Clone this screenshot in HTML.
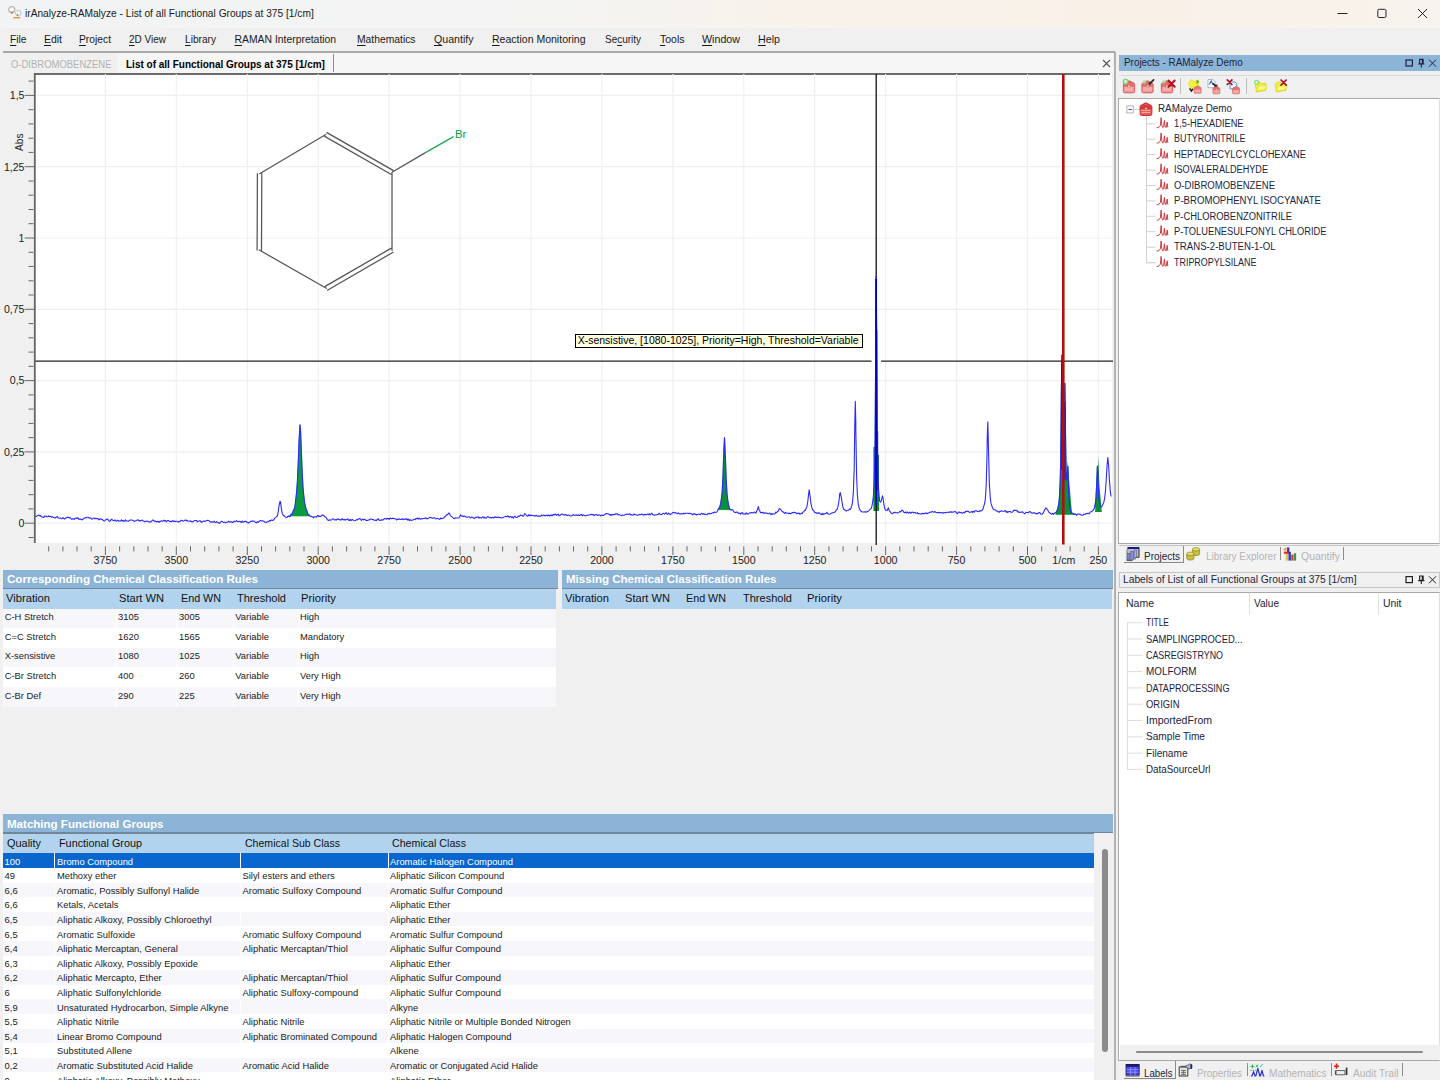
<!DOCTYPE html>
<html><head><meta charset="utf-8"><title>irAnalyze-RAMalyze</title>
<style>
html,body{margin:0;padding:0;}
body{width:1440px;height:1080px;overflow:hidden;position:relative;background:#f0f0f0;font-family:"Liberation Sans", sans-serif;}
.t{position:absolute;white-space:pre;transform-origin:0 50%;}
u{text-decoration:underline;text-underline-offset:1.5px;text-decoration-thickness:1px}
svg{position:absolute;left:0;top:0;overflow:visible}
</style></head><body>
<div style="position:absolute;left:0px;top:0px;width:1440px;height:28px;background:linear-gradient(90deg,#f1f3f4 0%,#f4f4f3 38%,#f8f2ea 56%,#f9f1e8 80%,#f8f3ed 100%);"></div>
<svg width="1440" height="28"><g stroke="#222" stroke-width="1" fill="none">
<path d="M1337.5 13.5h10"/><rect x="1377.8" y="9.3" width="8.2" height="8.2" rx="1.4"/><path d="M1418 9l9 9M1427 9l-9 9"/></g></svg>
<svg width="30" height="28"><circle cx="18.3" cy="13" r="2.8" fill="#fafafa" stroke="#c4c4c4" stroke-width="1"/>
<circle cx="11.7" cy="9.6" r="3" fill="#fff" stroke="#b2b2b2" stroke-width="1.2"/><circle cx="11.9" cy="12.7" r="1.1" fill="#f25a5a"/>
<path d="M16.4 15.6l1.2-1.8 1 1.8z" fill="#777"/><path d="M13.3 17.7h7.1" stroke="#f08838" stroke-width="1.3"/></svg>
<div style="position:absolute;left:0px;top:28px;width:1440px;height:24px;background:#f0f0f0;"></div>
<div style="position:absolute;left:3px;top:51px;width:1112px;height:2px;background:#a9a9a9;"></div>
<div style="position:absolute;left:4px;top:53px;width:1109px;height:20px;background:#f6f6f6;"></div>
<div style="position:absolute;left:4px;top:53px;width:113px;height:20px;background:#f0f0f0;"></div>
<div style="position:absolute;left:333px;top:54px;width:1px;height:18px;background:#8a8a8a;"></div>
<svg width="1440" height="80"><path d="M1103 60l7 7M1110 60l-7 7" stroke="#555" stroke-width="1.1" fill="none"/></svg>
<div style="position:absolute;left:1114px;top:52px;width:1.8px;height:1028px;background:#b2b2b2;"></div>
<div style="position:absolute;left:35px;top:74px;width:1076.5px;height:469px;background:#ffffff;"></div>
<div style="position:absolute;left:35px;top:73px;width:1074.5px;height:2px;background:#6c6c6c;"></div>
<svg width="1440" height="600" shape-rendering="auto"><path d="M1098.4 74V543 M1027.5 74V543 M956.6 74V543 M885.6 74V543 M814.7 74V543 M743.8 74V543 M672.9 74V543 M601.9 74V543 M531.0 74V543 M460.1 74V543 M389.1 74V543 M318.2 74V543 M247.3 74V543 M176.3 74V543 M105.4 74V543 M35 523.2H1111.5 M35 451.9H1111.5 M35 380.6H1111.5 M35 309.3H1111.5 M35 238.0H1111.5 M35 166.7H1111.5 M35 95.4H1111.5" stroke="#f0f0f0" stroke-width="1.2" fill="none"/><path d="M288.6 516.0L289.4 516.8L290.2 516.2L291.0 514.2L291.8 514.3L292.6 512.5L293.4 510.6L294.2 509.0L295.0 505.9L295.8 499.3L296.6 492.0L297.4 481.3L298.2 463.8L299.0 441.4L300.0 424.8L300.6 431.2L301.4 452.7L302.2 472.2L303.0 487.3L303.8 495.8L304.6 502.5L305.4 506.5L306.2 509.4L307.0 511.1L307.8 513.8L308.6 515.2L309.4 514.9L309.4 516.0L288.6 516.0Z" fill="#0c9a40" stroke="#0c9a40" stroke-width="0.6"/><path d="M718.2 509.4L719.0 508.1L719.8 506.5L720.6 503.9L721.4 498.5L722.2 491.5L723.0 475.1L723.8 451.2L724.5 437.5L725.4 457.2L726.2 479.4L727.0 493.7L727.8 500.6L728.6 504.9L729.4 508.0L730.2 509.8L731.0 509.6L731.8 509.7L732.6 509.7L732.6 509.7L718.2 509.7Z" fill="#0b8f37" stroke="#0b8f37" stroke-width="0.6"/><path d="M873.4 496.4L874.2 483.4L875.0 446.7L875.8 339.5L875.8 329.4L876.2 276.1L876.6 327.4L876.7 338.2L877.4 446.6L878.2 483.5L879.0 496.1L879.8 501.3L879.8 501.3L873.4 501.3Z" fill="#0b8f37" stroke="#0b8f37" stroke-width="0.6"/><path d="M1055.8 512.4L1056.6 511.5L1057.4 509.6L1058.2 506.6L1059.0 502.3L1059.8 491.7L1060.6 464.7L1061.3 393.6L1061.4 387.4L1061.8 355.1L1062.2 383.9L1062.2 389.7L1063.0 453.8L1063.8 459.1L1064.5 416.0L1064.9 383.2L1065.4 418.2L1065.4 423.7L1066.2 475.6L1067.0 480.6L1067.3 473.7L1067.8 466.4L1068.2 477.9L1068.6 489.6L1069.4 504.1L1070.2 508.3L1071.0 511.7L1071.8 512.9L1072.6 513.3L1073.4 513.9L1074.2 513.8L1075.0 514.5L1075.0 514.5L1055.8 514.5Z" fill="#0b8f37" stroke="#0b8f37" stroke-width="0.6"/><path d="M1095.0 505.5L1095.8 500.0L1096.6 485.9L1097.0 474.1L1097.4 466.1L1097.9 474.1L1098.2 484.8L1099.0 499.5L1099.8 504.8L1100.6 506.1L1101.4 506.9L1101.4 506.9L1095.0 506.9Z" fill="#0b8f37" stroke="#0b8f37" stroke-width="0.6"/><path d="M873.4 511V447h1.6V330h2.4V455h1.6v56z" fill="#0b8f37"/><path d="M1095 512l2.6-30 .8-26.4 1 30 2.4 26.4z" fill="#0b8f37"/><path d="M1058 514l2.5-38h6.3l1-15.3 1.2 18 3 35.3z" fill="#0b8f37"/><path d="M35 361.1H871.5M881 361.1H1113" stroke="#222" stroke-width="1.3" fill="none"/><path d="M876.2 74V545" stroke="#111" stroke-width="1.3" fill="none"/><path d="M35.0 516.2L35.8 516.4L36.6 516.4L37.4 515.6L38.2 515.3L39.0 515.1L39.8 516.0L40.6 515.6L41.4 516.7L42.2 516.9L43.0 517.4L43.8 517.4L44.6 516.1L45.4 516.2L46.2 516.1L47.0 516.8L47.8 516.7L48.6 515.8L49.4 516.6L50.2 516.4L51.0 516.5L51.8 517.4L52.6 516.8L53.4 517.3L54.2 517.7L55.0 518.1L55.8 517.5L56.6 516.9L57.4 516.6L58.2 517.8L59.0 518.3L59.8 518.3L60.6 518.1L61.4 518.7L62.2 518.4L63.0 517.6L63.8 518.6L64.6 519.0L65.4 518.5L66.2 517.7L67.0 517.4L67.8 517.4L68.6 517.3L69.4 518.0L70.2 517.6L71.0 518.5L71.8 519.5L72.6 518.7L73.4 518.8L74.2 519.5L75.0 518.4L75.8 518.1L76.6 518.5L77.4 517.7L78.2 518.1L79.0 519.4L79.8 519.1L80.6 519.0L81.4 519.6L82.2 520.0L83.0 519.1L83.8 518.5L84.6 517.9L85.4 517.8L86.2 517.9L87.0 517.2L87.8 517.3L88.6 517.5L89.4 518.3L90.2 518.0L91.0 518.0L91.8 519.2L92.6 519.0L93.4 518.0L94.2 518.1L95.0 518.9L95.8 518.2L96.6 518.6L97.4 518.6L98.2 519.0L99.0 519.8L99.8 519.0L100.6 518.8L101.4 519.5L102.2 519.2L103.0 520.3L103.8 520.8L104.6 521.0L105.4 520.0L106.2 519.6L107.0 518.9L107.8 519.2L108.6 520.4L109.4 521.1L110.2 521.2L111.0 519.8L111.8 519.2L112.6 520.1L113.4 520.6L114.2 520.7L115.0 519.8L115.8 521.0L116.6 521.1L117.4 520.3L118.2 520.4L119.0 521.3L119.8 521.0L120.6 521.0L121.4 519.9L122.2 521.1L123.0 520.3L123.8 521.5L124.6 520.8L125.4 519.8L126.2 521.1L127.0 521.0L127.8 521.0L128.6 521.3L129.4 520.4L130.2 520.1L131.0 520.0L131.8 520.0L132.6 520.2L133.4 521.0L134.2 521.1L135.0 521.1L135.8 520.8L136.6 520.5L137.4 519.9L138.2 519.9L139.0 520.9L139.8 520.5L140.6 521.0L141.4 520.3L142.2 520.1L143.0 521.0L143.8 521.1L144.6 521.7L145.4 521.4L146.2 521.2L147.0 521.0L147.8 521.2L148.6 521.8L149.4 522.1L150.2 521.9L151.0 521.9L151.8 520.8L152.6 520.1L153.4 520.0L154.2 521.4L155.0 520.9L155.8 521.2L156.6 522.1L157.4 521.5L158.2 521.4L159.0 522.5L159.8 521.4L160.6 521.4L161.4 520.8L162.2 521.2L163.0 521.2L163.8 520.1L164.6 520.9L165.4 520.5L166.2 521.8L167.0 520.8L167.8 520.6L168.6 520.6L169.4 521.2L170.2 521.8L171.0 521.2L171.8 521.7L172.6 520.7L173.4 521.4L174.2 521.0L175.0 521.8L175.8 521.3L176.6 521.2L177.4 521.6L178.2 522.1L179.0 521.5L179.8 521.6L180.6 520.7L181.4 520.2L182.2 520.5L183.0 521.2L183.8 520.9L184.6 520.4L185.4 519.9L186.2 520.8L187.0 520.2L187.8 521.0L188.6 521.3L189.4 521.1L190.2 520.8L191.0 521.6L191.8 521.4L192.6 521.9L193.4 521.5L194.2 520.5L195.0 520.5L195.8 520.5L196.6 520.6L197.4 521.9L198.2 521.2L199.0 521.0L199.8 520.7L200.6 521.1L201.4 522.4L202.2 521.8L203.0 521.5L203.8 520.9L204.6 521.4L205.4 521.2L206.2 520.6L207.0 520.5L207.8 520.2L208.6 520.5L209.4 521.2L210.2 521.8L211.0 522.2L211.8 521.6L212.6 522.2L213.4 522.2L214.2 521.2L215.0 522.3L215.8 522.6L216.6 521.6L217.4 522.1L218.2 522.9L219.0 522.9L219.8 523.1L220.6 522.0L221.4 521.4L222.2 521.4L223.0 522.2L223.8 522.6L224.6 522.1L225.4 522.8L226.2 522.4L227.0 522.3L227.8 522.3L228.6 521.1L229.4 521.7L230.2 522.3L231.0 521.9L231.8 521.9L232.6 522.5L233.4 522.1L234.2 521.1L235.0 521.8L235.8 521.5L236.6 520.5L237.4 521.5L238.2 521.6L239.0 521.5L239.8 521.2L240.6 521.8L241.4 522.5L242.2 521.0L243.0 522.2L243.8 521.8L244.6 521.6L245.4 521.4L246.2 521.3L247.0 522.4L247.8 522.6L248.6 523.0L249.4 522.2L250.2 521.9L251.0 521.1L251.8 521.4L252.6 520.9L253.4 521.3L254.2 521.0L255.0 521.9L255.8 522.6L256.6 522.6L257.4 521.7L258.2 522.5L259.0 521.6L259.8 520.8L260.6 520.6L261.4 521.0L262.2 520.8L263.0 521.0L263.8 521.1L264.6 522.1L265.4 522.2L266.2 522.5L267.0 521.9L267.8 521.7L268.6 521.7L269.4 520.5L270.2 521.0L271.0 520.3L271.8 519.9L272.6 520.5L273.4 520.0L274.2 519.3L275.0 517.9L275.8 517.4L276.6 516.5L277.4 515.9L278.2 511.9L279.0 505.8L280.0 501.3L280.6 502.1L281.4 508.7L282.2 513.2L283.0 515.1L283.8 516.0L284.6 515.9L285.4 517.3L286.2 517.2L287.0 517.5L287.8 516.4L288.6 516.0L289.4 516.8L290.2 516.2L291.0 514.2L291.8 514.3L292.6 512.5L293.4 510.6L294.2 509.0L295.0 505.9L295.8 499.3L296.6 492.0L297.4 481.3L298.2 463.8L299.0 441.4L300.0 424.8L300.6 431.2L301.4 452.7L302.2 472.2L303.0 487.3L303.8 495.8L304.6 502.5L305.4 506.5L306.2 509.4L307.0 511.1L307.8 513.8L308.6 515.2L309.4 514.9L310.2 516.6L311.0 516.1L311.8 516.7L312.6 516.8L313.4 517.7L314.2 516.9L315.0 516.8L315.8 517.0L316.6 517.1L317.4 515.6L318.0 515.5L319.0 516.5L319.8 516.3L320.6 516.5L321.4 516.1L322.2 514.9L323.0 515.3L323.8 515.3L324.6 516.6L325.4 517.0L326.2 517.3L327.0 519.3L327.8 520.1L328.6 520.5L329.4 519.8L330.2 520.1L331.0 520.1L331.8 519.6L332.6 518.8L333.4 518.8L334.2 519.7L335.0 520.1L335.8 519.5L336.6 520.0L337.4 518.9L338.2 519.4L339.0 519.0L339.8 519.9L340.6 519.7L341.4 519.9L342.2 518.6L343.0 519.6L343.8 520.0L344.6 519.3L345.4 520.2L346.2 519.5L347.0 519.2L347.8 518.8L348.6 520.2L349.4 520.4L350.2 519.4L351.0 520.6L351.8 519.8L352.6 519.6L353.4 520.2L354.2 520.5L355.0 520.7L355.8 520.3L356.6 519.6L357.4 519.9L358.2 519.3L359.0 518.8L359.8 518.5L360.6 519.2L361.4 520.5L362.2 519.6L363.0 519.0L363.8 519.9L364.6 519.3L365.4 519.9L366.2 520.5L367.0 520.2L367.8 520.4L368.6 519.9L369.4 519.9L370.2 519.0L371.0 518.9L371.8 519.3L372.6 519.6L373.4 519.5L374.2 520.2L375.0 520.5L375.8 520.0L376.6 520.6L377.4 519.2L378.2 518.7L379.0 520.1L379.8 520.4L380.6 520.4L381.4 519.6L382.2 520.1L383.0 519.9L383.8 519.1L384.6 518.5L385.4 518.7L386.2 519.2L387.0 518.3L387.8 518.9L388.6 518.5L389.4 519.3L390.2 518.1L391.0 518.4L391.8 518.7L392.6 518.3L393.4 518.4L394.2 518.6L395.0 518.7L395.8 518.7L396.6 520.0L397.4 519.2L398.2 519.5L399.0 518.7L399.8 519.2L400.6 519.5L401.4 519.4L402.2 518.6L403.0 519.7L403.8 519.1L404.6 519.3L405.4 518.8L406.2 519.5L407.0 518.9L407.8 520.2L408.6 519.2L409.4 520.5L410.2 519.7L411.0 520.2L411.8 520.4L412.6 520.1L413.4 519.8L414.2 519.3L415.0 519.6L415.8 518.6L416.6 518.8L417.4 518.0L418.2 519.1L419.0 518.2L419.8 518.9L420.6 519.1L421.4 518.9L422.2 518.8L423.0 518.5L423.8 518.5L424.6 518.5L425.4 517.8L426.2 518.2L427.0 519.0L427.8 518.5L428.6 518.2L429.4 517.6L430.2 517.3L431.0 517.7L431.8 517.9L432.6 518.4L433.4 517.9L434.2 517.8L435.0 518.4L435.8 518.8L436.6 518.9L437.4 518.2L438.2 518.6L439.0 519.1L439.8 519.4L440.6 518.0L441.4 518.4L442.2 518.6L443.0 518.3L443.8 517.9L444.6 516.8L445.4 516.6L446.2 515.2L447.0 514.6L447.8 514.6L448.6 513.1L449.0 513.2L449.4 513.5L450.2 515.2L451.0 516.3L451.8 516.5L452.6 517.4L453.4 518.1L454.2 518.8L455.0 518.2L455.8 517.8L456.6 518.0L457.4 518.0L458.2 518.0L459.0 517.7L459.8 516.3L460.6 514.7L461.0 515.8L461.4 515.9L462.2 515.8L463.0 516.7L463.8 516.1L464.6 516.1L465.4 516.5L466.2 517.1L467.0 517.4L467.8 517.1L468.6 516.8L469.4 516.7L470.2 518.1L471.0 517.6L471.8 516.9L472.6 517.5L473.4 517.8L474.2 518.6L475.0 517.9L475.8 517.2L476.6 517.4L477.4 517.1L478.2 516.8L479.0 518.1L479.8 517.4L480.6 517.7L481.4 518.1L482.2 517.3L483.0 516.9L483.8 518.0L484.6 517.2L485.4 518.0L486.2 518.3L487.0 517.2L487.8 516.6L488.6 516.9L489.4 517.7L490.2 517.8L491.0 517.5L491.8 517.9L492.6 517.2L493.4 517.9L494.2 517.7L495.0 516.6L495.8 517.4L496.6 517.4L497.4 517.6L498.2 516.9L499.0 517.3L499.8 517.8L500.6 517.6L501.4 518.1L502.2 517.8L503.0 517.7L503.8 517.1L504.6 516.8L505.4 516.4L506.2 516.5L507.0 516.6L507.8 515.8L508.6 516.8L509.4 517.3L510.2 516.4L511.0 516.7L511.8 517.7L512.6 516.8L513.4 518.1L514.2 516.8L515.0 516.1L515.8 517.3L516.6 517.5L517.4 517.2L518.2 516.0L519.0 516.5L519.8 516.0L520.6 515.1L521.4 515.4L522.2 515.3L523.0 516.2L523.8 515.9L524.6 513.6L525.0 514.0L525.4 514.0L526.2 515.0L527.0 515.9L527.8 516.1L528.6 514.7L529.4 515.9L530.2 514.9L531.0 515.6L531.8 515.3L532.6 515.6L533.4 515.8L534.2 515.5L535.0 516.2L535.8 515.5L536.6 515.3L537.4 516.3L538.2 516.4L539.0 515.9L539.8 516.3L540.6 516.2L541.4 515.0L542.2 515.8L543.0 515.5L543.8 515.0L544.6 515.5L545.4 516.0L546.2 515.4L547.0 515.0L547.8 515.8L548.6 515.1L549.4 515.9L550.2 515.0L551.0 515.8L551.8 514.8L552.6 515.6L553.4 514.6L554.2 514.4L555.0 514.6L555.8 514.2L556.6 515.4L557.4 514.6L558.2 514.1L559.0 515.7L559.8 515.6L560.6 514.8L561.4 514.1L562.2 514.1L563.0 514.5L563.8 515.0L564.6 515.1L565.4 514.4L566.2 514.7L567.0 515.5L567.8 515.4L568.6 514.9L569.4 515.5L570.2 515.8L571.0 516.1L571.8 515.7L572.6 515.1L573.4 514.4L574.2 515.5L575.0 515.3L575.8 515.0L576.6 515.1L577.4 515.5L578.2 514.8L579.0 515.4L579.8 515.5L580.6 514.6L581.4 514.6L582.2 515.8L583.0 514.8L583.8 515.3L584.6 515.4L585.4 515.9L586.2 515.6L587.0 515.1L587.8 515.3L588.6 515.1L589.4 515.0L590.2 514.8L591.0 514.2L591.8 514.8L592.6 514.6L593.4 514.5L594.2 515.6L595.0 515.0L595.8 514.7L596.6 514.4L597.4 515.4L598.2 515.2L599.0 514.9L599.8 515.0L600.6 515.9L601.4 515.3L602.2 515.0L603.0 515.4L603.8 515.4L604.6 514.5L605.4 514.1L606.2 513.5L607.0 513.6L607.8 513.7L608.6 514.0L609.4 514.4L610.2 515.3L611.0 514.2L611.8 515.4L612.6 514.6L613.4 514.7L614.2 514.1L615.0 514.7L615.8 513.7L616.6 513.9L617.4 513.8L618.2 515.0L619.0 514.4L619.8 514.9L620.6 515.4L621.4 515.8L622.2 514.9L623.0 515.2L623.8 515.3L624.6 515.2L625.4 514.4L626.2 514.3L627.0 514.1L627.8 514.2L628.6 514.5L629.4 513.8L630.2 514.3L631.0 515.0L631.8 514.6L632.6 515.1L633.4 514.9L634.2 513.9L635.0 514.8L635.8 514.7L636.6 514.8L637.4 515.2L638.2 515.1L639.0 514.7L639.8 514.4L640.6 514.7L641.4 514.1L642.2 514.3L643.0 514.9L643.8 515.1L644.6 514.4L645.4 514.6L646.2 514.9L647.0 514.2L647.8 514.0L648.6 514.7L649.4 513.9L650.2 515.0L651.0 513.8L651.8 513.1L652.6 514.6L653.4 514.8L654.2 515.2L655.0 514.9L655.8 515.0L656.6 514.7L657.4 514.6L658.2 514.5L659.0 513.2L659.8 514.2L660.6 514.2L661.4 514.7L662.2 514.1L663.0 513.5L663.8 513.3L664.6 514.1L665.4 513.3L666.2 512.7L667.0 514.0L667.8 514.5L668.6 513.1L669.4 513.9L670.2 514.7L671.0 513.8L671.8 513.8L672.6 512.7L673.4 512.3L674.2 512.7L675.0 512.9L675.8 512.6L676.6 513.5L677.4 513.7L678.2 512.8L679.0 513.8L679.8 513.9L680.6 513.9L681.4 513.9L682.2 513.7L683.0 514.0L683.8 513.1L684.6 513.8L685.4 513.4L686.2 513.2L687.0 513.3L687.8 513.3L688.6 513.5L689.4 513.2L690.2 513.4L691.0 513.9L691.8 513.8L692.6 514.8L693.4 514.2L694.2 513.5L695.0 514.4L695.8 514.0L696.6 515.0L697.4 514.5L698.2 514.3L699.0 514.0L699.8 514.5L700.6 514.7L701.4 513.2L702.2 513.5L703.0 514.4L703.8 513.5L704.6 514.5L705.4 514.2L706.2 514.7L707.0 514.7L707.8 513.6L708.6 513.8L709.4 513.3L710.2 514.0L711.0 513.8L711.8 513.1L712.6 512.6L713.4 513.1L714.2 512.1L715.0 512.4L715.8 512.3L716.6 512.3L717.4 511.2L718.2 509.4L719.0 508.1L719.8 506.5L720.6 503.9L721.4 498.5L722.2 491.5L723.0 475.1L723.8 451.2L724.5 437.5L725.4 457.2L726.2 479.4L727.0 493.7L727.8 500.6L728.6 504.9L729.4 508.0L730.2 509.8L731.0 509.6L731.8 509.7L732.6 509.7L733.4 511.1L734.2 511.8L735.0 512.6L735.8 512.5L736.6 512.1L737.4 512.2L738.2 513.2L739.0 513.4L739.8 513.0L740.6 514.2L741.4 512.9L742.2 512.6L743.0 513.9L743.8 513.9L744.6 514.0L745.4 514.1L746.2 512.8L747.0 513.9L747.8 513.9L748.6 514.0L749.4 513.0L750.2 512.7L751.0 512.9L751.8 512.4L752.6 512.7L753.4 512.9L754.2 512.1L755.0 512.2L755.8 513.2L756.6 511.6L757.4 509.5L757.8 508.5L758.3 506.5L758.8 508.7L759.0 509.5L759.8 511.1L760.6 512.7L761.4 512.6L762.2 512.6L763.0 512.4L763.8 513.5L764.6 512.8L765.4 513.1L766.2 513.1L767.0 513.1L767.8 513.8L768.6 513.7L769.4 513.1L770.2 513.5L771.0 514.8L771.8 513.4L772.6 514.1L773.4 513.9L774.2 514.0L775.0 513.7L775.8 512.1L776.6 512.7L777.4 511.5L778.2 511.3L779.0 509.1L779.7 508.5L780.6 509.6L781.4 510.2L782.2 511.7L783.0 511.7L783.8 512.6L784.6 513.3L785.4 512.3L786.2 513.0L787.0 513.0L787.8 513.3L788.6 513.8L789.4 513.0L790.2 513.6L791.0 513.6L791.8 512.8L792.6 512.6L793.4 512.7L794.2 512.1L795.0 512.7L795.8 512.5L796.6 513.8L797.4 513.4L798.2 513.4L799.0 513.0L799.8 514.2L800.6 513.8L801.4 513.3L802.2 513.6L803.0 512.0L803.8 511.7L804.6 510.4L805.4 510.4L806.2 508.3L807.0 506.4L807.8 501.5L808.6 493.9L809.2 489.8L810.2 497.2L811.0 503.6L811.8 507.2L812.6 509.8L813.4 510.3L814.2 511.6L815.0 512.7L815.8 512.4L816.6 513.2L817.4 513.1L818.2 513.5L819.0 512.7L819.8 513.2L820.6 514.1L821.4 514.6L822.2 513.3L823.0 514.7L823.8 513.7L824.6 513.9L825.4 513.5L826.2 513.3L827.0 512.3L827.8 513.8L828.6 514.2L829.4 514.3L830.2 514.0L831.0 513.4L831.8 513.0L832.6 512.9L833.4 512.6L834.2 512.1L835.0 512.3L835.8 510.9L836.6 509.4L837.4 509.0L838.2 505.5L839.0 500.6L839.8 493.4L840.3 492.7L841.4 498.0L842.2 503.1L843.0 507.5L843.8 509.3L844.6 509.7L845.4 510.5L846.2 511.1L847.0 510.6L847.8 510.3L848.6 510.3L849.4 509.1L850.2 509.5L851.0 508.2L851.8 505.8L852.6 501.6L853.4 491.8L854.2 468.5L854.8 422.9L855.3 401.4L855.8 422.7L855.8 428.2L856.6 476.3L857.4 495.3L858.2 503.5L859.0 507.5L859.8 509.6L860.6 510.7L861.4 511.6L862.2 512.0L863.0 512.0L863.8 512.0L864.6 511.9L865.4 511.8L866.2 512.3L867.0 511.8L867.8 511.2L868.6 511.0L869.4 510.1L870.2 509.0L871.0 508.7L871.8 506.6L872.6 502.6L873.4 496.4L874.2 483.4L875.0 446.7L875.8 339.5L875.8 329.4L876.2 276.1L876.6 327.4L876.7 338.2L877.4 446.6L878.2 483.5L879.0 496.1L879.8 501.3L880.6 502.2L881.4 500.4L882.5 495.8L883.0 497.8L883.8 503.7L884.6 507.8L885.4 510.1L886.2 510.2L887.0 510.6L887.8 509.0L888.3 507.7L889.4 511.1L890.2 511.6L891.0 512.8L891.8 513.5L892.6 513.8L893.4 512.5L894.2 512.8L895.0 512.1L895.8 512.8L896.6 512.8L897.4 512.9L898.2 512.7L899.0 512.4L899.8 511.3L900.6 511.9L901.4 510.9L902.0 510.1L903.0 510.8L903.8 512.3L904.6 512.8L905.4 512.1L906.2 512.9L907.0 511.9L907.8 512.7L908.6 513.2L909.4 512.1L910.2 512.9L911.0 513.1L911.8 512.2L912.6 512.1L913.4 512.7L914.2 512.7L915.0 512.3L915.8 513.2L916.6 513.3L917.4 512.6L918.2 513.9L919.0 513.4L919.8 513.9L920.6 514.0L921.4 514.0L922.2 513.3L923.0 513.7L923.8 513.4L924.6 513.7L925.4 513.0L926.2 512.9L927.0 513.8L927.8 513.2L928.6 513.0L929.4 512.4L930.2 512.1L931.0 512.2L931.8 511.8L932.6 511.6L933.4 512.3L934.2 511.9L935.0 511.5L935.8 512.4L936.6 512.5L937.4 512.8L938.2 512.4L939.0 512.6L939.8 512.5L940.6 512.7L941.4 512.5L942.2 512.8L943.0 513.4L943.8 512.5L944.6 512.5L945.4 512.9L946.2 512.5L947.0 512.2L947.8 512.3L948.6 512.5L949.4 512.1L950.2 511.9L951.0 512.1L951.8 511.9L952.6 512.2L953.4 511.9L954.2 511.8L955.0 511.6L955.8 511.8L956.6 513.1L957.4 513.7L958.2 512.3L959.0 511.9L959.8 512.6L960.6 512.6L961.4 512.8L962.2 513.2L963.0 512.7L963.8 512.1L964.6 512.9L965.4 511.6L966.2 511.3L967.0 511.5L967.8 511.0L968.6 511.7L969.4 512.4L970.2 512.3L971.0 512.0L971.8 511.3L972.6 512.3L973.4 511.3L974.2 512.1L975.0 510.8L975.8 510.7L976.6 510.9L977.4 511.5L978.2 511.5L979.0 511.7L979.8 510.5L980.6 511.0L981.4 510.9L982.2 510.2L983.0 508.9L983.8 506.2L984.6 503.5L985.4 498.4L986.2 485.4L987.0 455.4L987.3 435.4L987.8 421.7L988.2 435.9L988.6 454.1L989.4 484.4L990.2 496.8L991.0 503.4L991.8 505.7L992.6 507.7L993.4 509.5L994.2 509.7L995.0 509.7L995.8 510.4L996.6 511.2L997.4 511.0L998.2 511.6L999.0 512.4L999.8 511.4L1000.6 511.4L1001.4 510.8L1002.2 511.1L1003.0 511.3L1003.8 511.3L1004.6 511.2L1005.4 510.5L1006.2 512.2L1007.0 511.3L1007.8 512.6L1008.6 511.5L1009.4 511.5L1010.2 511.4L1011.0 512.3L1011.8 512.3L1012.6 511.9L1013.4 510.8L1014.2 510.0L1015.0 510.5L1016.0 510.2L1016.6 510.9L1017.4 510.8L1018.2 512.3L1019.0 511.8L1019.8 512.5L1020.6 512.2L1021.4 512.3L1022.2 511.7L1023.0 512.3L1023.8 513.1L1024.6 513.7L1025.4 513.2L1026.2 512.2L1027.0 512.4L1027.8 512.5L1028.6 512.6L1029.4 511.6L1030.2 511.8L1031.0 512.3L1031.8 513.1L1032.6 513.3L1033.4 512.7L1034.2 512.9L1035.0 512.8L1035.8 513.6L1036.6 514.0L1037.4 513.2L1038.2 513.4L1039.0 512.6L1039.8 512.6L1040.6 514.0L1041.4 514.3L1042.2 514.2L1043.0 513.2L1043.8 511.9L1044.6 509.7L1045.4 509.0L1046.0 507.8L1047.0 509.1L1047.8 509.9L1048.6 512.1L1049.4 512.4L1050.2 513.3L1051.0 513.8L1051.8 514.2L1052.6 513.3L1053.4 514.4L1054.2 513.5L1055.0 512.8L1055.8 512.4L1056.6 511.5L1057.4 509.6L1058.2 506.6L1059.0 502.3L1059.8 491.7L1060.6 464.7L1061.3 393.6L1061.4 387.4L1061.8 355.1L1062.2 383.9L1062.2 389.7L1063.0 453.8L1063.8 459.1L1064.5 416.0L1064.9 383.2L1065.4 418.2L1065.4 423.7L1066.2 475.6L1067.0 480.6L1067.3 473.7L1067.8 466.4L1068.2 477.9L1068.6 489.6L1069.4 504.1L1070.2 508.3L1071.0 511.7L1071.8 512.9L1072.6 513.3L1073.4 513.9L1074.2 513.8L1075.0 514.5L1075.8 514.1L1076.6 515.2L1077.4 514.0L1078.2 514.0L1079.0 514.1L1079.8 514.4L1080.6 514.3L1081.4 515.2L1082.2 515.3L1083.0 515.3L1083.8 514.1L1084.6 514.2L1085.4 514.3L1086.2 513.5L1087.0 513.8L1087.8 513.2L1088.6 513.6L1089.4 513.7L1090.2 512.0L1091.0 511.8L1091.8 511.6L1092.6 510.5L1093.4 510.0L1094.2 508.6L1095.0 505.5L1095.8 500.0L1096.6 485.9L1097.0 474.1L1097.4 466.1L1097.9 474.1L1098.2 484.8L1099.0 499.5L1099.8 504.8L1100.6 506.1L1101.4 506.9L1102.2 506.0L1103.0 503.9L1103.8 502.2L1104.6 498.7L1105.4 491.2L1106.2 480.8L1107.0 466.3L1107.8 457.5L1108.6 465.0L1109.4 479.5L1110.2 490.4L1111.0 496.5" fill="none" stroke="#2a2aff" stroke-width="1.1" stroke-linejoin="round"/><path d="M876.2 279V505" stroke="#0000b4" stroke-width="1.7"/><path d="M877.6 431V490" stroke="#1818e0" stroke-width="1.2"/><path d="M1061.8 360V470M1064.9 402V480" stroke="#1010d8" stroke-width="1.1"/><path d="M1063.3 74V544.5" stroke="#b00f12" stroke-width="2.6"/><path d="M34.8 73V543" stroke="#646464" stroke-width="1.8"/><path d="M28.5 537.5H33.5 M24.6 523.2H34 M28.5 508.9H33.5 M28.5 494.7H33.5 M28.5 480.4H33.5 M28.5 466.2H33.5 M24.6 451.9H34 M28.5 437.6H33.5 M28.5 423.4H33.5 M28.5 409.1H33.5 M28.5 394.9H33.5 M24.6 380.6H34 M28.5 366.3H33.5 M28.5 352.1H33.5 M28.5 337.8H33.5 M28.5 323.6H33.5 M24.6 309.3H34 M28.5 295.0H33.5 M28.5 280.8H33.5 M28.5 266.5H33.5 M28.5 252.3H33.5 M24.6 238.0H34 M28.5 223.7H33.5 M28.5 209.5H33.5 M28.5 195.2H33.5 M28.5 181.0H33.5 M24.6 166.7H34 M28.5 152.4H33.5 M28.5 138.2H33.5 M28.5 123.9H33.5 M28.5 109.7H33.5 M24.6 95.4H34 M28.5 81.1H33.5" stroke="#666" stroke-width="1" fill="none"/><path d="M1098.4 546.3V555 M1084.2 546.3V551.4 M1070.1 546.3V551.4 M1055.9 546.3V551.4 M1041.7 546.3V551.4 M1027.5 546.3V555 M1013.3 546.3V551.4 M999.1 546.3V551.4 M984.9 546.3V551.4 M970.8 546.3V551.4 M956.6 546.3V555 M942.4 546.3V551.4 M928.2 546.3V551.4 M914.0 546.3V551.4 M899.8 546.3V551.4 M885.6 546.3V555 M871.5 546.3V551.4 M857.3 546.3V551.4 M843.1 546.3V551.4 M828.9 546.3V551.4 M814.7 546.3V555 M800.5 546.3V551.4 M786.3 546.3V551.4 M772.2 546.3V551.4 M758.0 546.3V551.4 M743.8 546.3V555 M729.6 546.3V551.4 M715.4 546.3V551.4 M701.2 546.3V551.4 M687.0 546.3V551.4 M672.9 546.3V555 M658.7 546.3V551.4 M644.5 546.3V551.4 M630.3 546.3V551.4 M616.1 546.3V551.4 M601.9 546.3V555 M587.7 546.3V551.4 M573.5 546.3V551.4 M559.4 546.3V551.4 M545.2 546.3V551.4 M531.0 546.3V555 M516.8 546.3V551.4 M502.6 546.3V551.4 M488.4 546.3V551.4 M474.2 546.3V551.4 M460.1 546.3V555 M445.9 546.3V551.4 M431.7 546.3V551.4 M417.5 546.3V551.4 M403.3 546.3V551.4 M389.1 546.3V555 M374.9 546.3V551.4 M360.8 546.3V551.4 M346.6 546.3V551.4 M332.4 546.3V551.4 M318.2 546.3V555 M304.0 546.3V551.4 M289.8 546.3V551.4 M275.6 546.3V551.4 M261.5 546.3V551.4 M247.3 546.3V555 M233.1 546.3V551.4 M218.9 546.3V551.4 M204.7 546.3V551.4 M190.5 546.3V551.4 M176.3 546.3V555 M162.2 546.3V551.4 M148.0 546.3V551.4 M133.8 546.3V551.4 M119.6 546.3V551.4 M105.4 546.3V555 M91.2 546.3V551.4 M77.0 546.3V551.4 M62.9 546.3V551.4 M48.7 546.3V551.4" stroke="#6a6a6a" stroke-width="1" fill="none"/><path d="M392 172.3L392 250.3 M326.3 288.3L259.3 250 M259.6 173.7L325.8 134.5 M326.9 132.6L393.1 170.4 M324.7 136.4L390.9 174.2 M393.1 252.2L327.4 290.2 M390.9 248.4L325.2 286.4 M257.1 250.0L257.4 173.7 M261.5 250.0L261.8 173.7" stroke="#555" stroke-width="1.25" fill="none" stroke-linecap="round"/><path d="M392 172.3L425 152.9" stroke="#555" stroke-width="1.25"/><path d="M425 152.9L453.5 136.6" stroke="#1aa850" stroke-width="1.25"/></svg>
<div style="position:absolute;left:575px;top:334px;width:288px;height:13px;background:#ffffe1;border:1px solid #000;box-sizing:border-box;height:14px;"></div>
<div style="position:absolute;left:3px;top:569.6px;width:555px;height:18.3px;background:#8cb4d6;"></div>
<div style="position:absolute;left:3px;top:587.8000000000001px;width:555px;height:1.2px;background:#6f8599;"></div>
<div style="position:absolute;left:3px;top:589px;width:553.4px;height:19.5px;background:#b1d3ee;"></div>
<div style="position:absolute;left:555.5px;top:588.6px;width:2.5px;height:120px;background:#f0f0f0;"></div>
<div style="position:absolute;left:3px;top:608.5px;width:553px;height:19.65px;background:#f7f7fb;"></div>
<div style="position:absolute;left:3px;top:628.15px;width:553px;height:19.65px;background:#fff;"></div>
<div style="position:absolute;left:3px;top:647.8px;width:553px;height:19.65px;background:#f7f7fb;"></div>
<div style="position:absolute;left:3px;top:667.45px;width:553px;height:19.65px;background:#fff;"></div>
<div style="position:absolute;left:3px;top:687.1px;width:553px;height:19.65px;background:#f7f7fb;"></div>
<div style="position:absolute;left:115.5px;top:608.5px;width:1px;height:98.2px;background:#ffffff;"></div>
<div style="position:absolute;left:176.2px;top:608.5px;width:1px;height:98.2px;background:#ffffff;"></div>
<div style="position:absolute;left:232.6px;top:608.5px;width:1px;height:98.2px;background:#ffffff;"></div>
<div style="position:absolute;left:297.5px;top:608.5px;width:1px;height:98.2px;background:#ffffff;"></div>
<div style="position:absolute;left:562px;top:569.6px;width:550.5999999999999px;height:18.3px;background:#8cb4d6;"></div>
<div style="position:absolute;left:562px;top:587.8000000000001px;width:550.5999999999999px;height:1.2px;background:#6f8599;"></div>
<div style="position:absolute;left:562px;top:589px;width:550px;height:19.5px;background:#b1d3ee;"></div>
<div style="position:absolute;left:3px;top:814.2px;width:1109.6px;height:18.3px;background:#8cb4d6;"></div>
<div style="position:absolute;left:3px;top:832.4000000000001px;width:1109.6px;height:1.2px;background:#6f8599;"></div>
<div style="position:absolute;left:3px;top:833.6px;width:1090.5px;height:20px;background:#b1d3ee;"></div>
<div style="position:absolute;left:3px;top:853.4px;width:1090.5px;height:14.6px;background:#0966cf;"></div>
<div style="position:absolute;left:3px;top:868.0px;width:1090.5px;height:14.6px;background:#fff;"></div>
<div style="position:absolute;left:3px;top:882.6px;width:1090.5px;height:14.6px;background:#f7f7fb;"></div>
<div style="position:absolute;left:3px;top:897.1999999999999px;width:1090.5px;height:14.6px;background:#fff;"></div>
<div style="position:absolute;left:3px;top:911.8px;width:1090.5px;height:14.6px;background:#f7f7fb;"></div>
<div style="position:absolute;left:3px;top:926.4px;width:1090.5px;height:14.6px;background:#fff;"></div>
<div style="position:absolute;left:3px;top:941.0px;width:1090.5px;height:14.6px;background:#f7f7fb;"></div>
<div style="position:absolute;left:3px;top:955.6px;width:1090.5px;height:14.6px;background:#fff;"></div>
<div style="position:absolute;left:3px;top:970.1999999999999px;width:1090.5px;height:14.6px;background:#f7f7fb;"></div>
<div style="position:absolute;left:3px;top:984.8px;width:1090.5px;height:14.6px;background:#fff;"></div>
<div style="position:absolute;left:3px;top:999.4px;width:1090.5px;height:14.6px;background:#f7f7fb;"></div>
<div style="position:absolute;left:3px;top:1014.0px;width:1090.5px;height:14.6px;background:#fff;"></div>
<div style="position:absolute;left:3px;top:1028.6px;width:1090.5px;height:14.6px;background:#f7f7fb;"></div>
<div style="position:absolute;left:3px;top:1043.2px;width:1090.5px;height:14.6px;background:#fff;"></div>
<div style="position:absolute;left:3px;top:1057.8px;width:1090.5px;height:14.6px;background:#f7f7fb;"></div>
<div style="position:absolute;left:3px;top:1072.4px;width:1090.5px;height:14.6px;background:#fff;"></div>
<div style="position:absolute;left:54px;top:853.4px;width:1px;height:230px;background:#ffffff;"></div>
<div style="position:absolute;left:240.4px;top:853.4px;width:1px;height:230px;background:#ffffff;"></div>
<div style="position:absolute;left:387.5px;top:853.4px;width:1px;height:230px;background:#ffffff;"></div>
<div style="position:absolute;left:1093.5px;top:833px;width:19.1px;height:250px;background:#f0f0f0;"></div>
<div style="position:absolute;left:1102px;top:849px;width:5.5px;height:202.5px;background:#8b8b8b;border-radius:3px;"></div>
<div style="position:absolute;left:1119px;top:54.5px;width:321px;height:16px;background:#8cb4d6;"></div>
<svg width="1440" height="1080"><g stroke="#1b2440" fill="none" stroke-width="1.2">
<rect x="1406" y="60.0" width="6.4" height="6"/><path d="M1429 59.7l7 7M1436 59.7l-7 7" stroke-width="1"/>
<path d="M1419.6 59.400000000000006h3.4v4.4h-3.4zM1418.2 64.0h6.2M1421.3 64.0v3.4" stroke-width="1.1"/><path d="M1422.6 59.400000000000006v4.4" stroke-width="1.6"/></g></svg>
<div style="position:absolute;left:1119px;top:72px;width:321px;height:26px;background:#f0f0f0;"></div>
<div style="position:absolute;left:1119px;top:75.3px;width:321px;height:1px;background:#dadada;"></div>
<div style="position:absolute;left:1180px;top:78px;width:1px;height:16px;background:#bdbdbd;"></div>
<div style="position:absolute;left:1245.5px;top:78px;width:1px;height:16px;background:#bdbdbd;"></div>
<div style="position:absolute;left:1118px;top:98px;width:321.6px;height:446px;background:#ffffff;border:1.4px solid #a8a8a8;border-right-color:#dedede;box-sizing:border-box;"></div>
<div style="position:absolute;left:1119px;top:545px;width:320px;height:1px;background:#c4c4c4;"></div>
<svg width="1440" height="300"><g stroke="#d2d2d2" stroke-width="1" fill="none">
<path d="M1133.5 109.5H1140M1146.5 116V262.8H1155.5"/><path d="M1146.5 123.8H1155.5"/><path d="M1146.5 139.2H1155.5"/><path d="M1146.5 154.6H1155.5"/><path d="M1146.5 170.1H1155.5"/><path d="M1146.5 185.5H1155.5"/><path d="M1146.5 200.9H1155.5"/><path d="M1146.5 216.3H1155.5"/><path d="M1146.5 231.7H1155.5"/><path d="M1146.5 247.2H1155.5"/><path d="M1146.5 262.6H1155.5"/></g>
<rect x="1126.9" y="105.9" width="6.4" height="7" fill="#fff" stroke="#b4b4b4" stroke-width="1"/><path d="M1128.4 109.5h3.6" stroke="#4060b0" stroke-width="1.1"/></svg>
<svg width="1440" height="300"><g stroke="#c8343a" stroke-width="0.95" fill="none" stroke-linejoin="round"><path transform="translate(1157,124.00)" d="M-0.3 3.6h1.8L3.4 1.4 4.1-6.4 4.8 1.4 5.6 3.4 6.6 3 7.4-3.6 8.1 3 9.2 3.4 10.2-2 10.8 3.4"/><path transform="translate(1157,139.42)" d="M-0.3 3.6h1.8L3.4 1.4 4.1-6.4 4.8 1.4 5.6 3.4 6.6 3 7.4-3.6 8.1 3 9.2 3.4 10.2-2 10.8 3.4"/><path transform="translate(1157,154.84)" d="M-0.3 3.6h1.8L3.4 1.4 4.1-6.4 4.8 1.4 5.6 3.4 6.6 3 7.4-3.6 8.1 3 9.2 3.4 10.2-2 10.8 3.4"/><path transform="translate(1157,170.26)" d="M-0.3 3.6h1.8L3.4 1.4 4.1-6.4 4.8 1.4 5.6 3.4 6.6 3 7.4-3.6 8.1 3 9.2 3.4 10.2-2 10.8 3.4"/><path transform="translate(1157,185.68)" d="M-0.3 3.6h1.8L3.4 1.4 4.1-6.4 4.8 1.4 5.6 3.4 6.6 3 7.4-3.6 8.1 3 9.2 3.4 10.2-2 10.8 3.4"/><path transform="translate(1157,201.10)" d="M-0.3 3.6h1.8L3.4 1.4 4.1-6.4 4.8 1.4 5.6 3.4 6.6 3 7.4-3.6 8.1 3 9.2 3.4 10.2-2 10.8 3.4"/><path transform="translate(1157,216.52)" d="M-0.3 3.6h1.8L3.4 1.4 4.1-6.4 4.8 1.4 5.6 3.4 6.6 3 7.4-3.6 8.1 3 9.2 3.4 10.2-2 10.8 3.4"/><path transform="translate(1157,231.94)" d="M-0.3 3.6h1.8L3.4 1.4 4.1-6.4 4.8 1.4 5.6 3.4 6.6 3 7.4-3.6 8.1 3 9.2 3.4 10.2-2 10.8 3.4"/><path transform="translate(1157,247.36)" d="M-0.3 3.6h1.8L3.4 1.4 4.1-6.4 4.8 1.4 5.6 3.4 6.6 3 7.4-3.6 8.1 3 9.2 3.4 10.2-2 10.8 3.4"/><path transform="translate(1157,262.78)" d="M-0.3 3.6h1.8L3.4 1.4 4.1-6.4 4.8 1.4 5.6 3.4 6.6 3 7.4-3.6 8.1 3 9.2 3.4 10.2-2 10.8 3.4"/></g></svg>
<div style="position:absolute;left:1119px;top:546px;width:321px;height:25px;background:#f3f3f3;"></div>
<div style="position:absolute;left:1124px;top:545.5px;width:59.6px;height:17.4px;background:#f0f0f0;border-right:1px solid #8a8a8a;border-bottom:1.2px solid #8a8a8a;box-sizing:border-box;"></div>
<div style="position:absolute;left:1279.5px;top:547px;width:1px;height:13px;background:#8c8c8c;"></div>
<div style="position:absolute;left:1343px;top:547px;width:1px;height:13px;background:#8c8c8c;"></div>
<div style="position:absolute;left:1119px;top:572px;width:321px;height:15.5px;background:#f0f0f0;border:1px solid #c6c6c6;box-sizing:border-box;"></div>
<svg width="1440" height="1080"><g stroke="#222" fill="none" stroke-width="1.2">
<rect x="1406" y="576.5999999999999" width="6.4" height="6"/><path d="M1429 576.3l7 7M1436 576.3l-7 7" stroke-width="1"/>
<path d="M1419.6 576.0h3.4v4.4h-3.4zM1418.2 580.5999999999999h6.2M1421.3 580.5999999999999v3.4" stroke-width="1.1"/><path d="M1422.6 576.0v4.4" stroke-width="1.6"/></g></svg>
<div style="position:absolute;left:1118px;top:591.5px;width:321.6px;height:469px;background:#ffffff;border:1.4px solid #a8a8a8;border-right-color:#dedede;box-sizing:border-box;"></div>
<div style="position:absolute;left:1249px;top:593px;width:1px;height:22px;background:#e4e4e4;"></div>
<div style="position:absolute;left:1377.5px;top:593px;width:1px;height:22px;background:#e4e4e4;"></div>
<svg width="1440" height="800"><g stroke="#dedede" stroke-width="1" fill="none"><path d="M1127.5 622.5V769.5"/><path d="M1127.5 622.7H1142.5"/><path d="M1127.5 639.0H1142.5"/><path d="M1127.5 655.3H1142.5"/><path d="M1127.5 671.6H1142.5"/><path d="M1127.5 687.9H1142.5"/><path d="M1127.5 704.2H1142.5"/><path d="M1127.5 720.5H1142.5"/><path d="M1127.5 736.8H1142.5"/><path d="M1127.5 753.1H1142.5"/><path d="M1127.5 769.4H1142.5"/></g></svg>
<div style="position:absolute;left:1120px;top:1045px;width:320px;height:14.5px;background:#f0f0f0;"></div>
<div style="position:absolute;left:1135.5px;top:1050.5px;width:287px;height:2.2px;background:#8b8b8b;border-radius:1px;"></div>
<div style="position:absolute;left:1119px;top:1061px;width:321px;height:19px;background:#f0f0f0;"></div>
<div style="position:absolute;left:1124.4px;top:1061.4px;width:51.4px;height:17.6px;background:#f0f0f0;border-right:1px solid #8a8a8a;border-bottom:1.2px solid #8a8a8a;box-sizing:border-box;"></div>
<div style="position:absolute;left:1247px;top:1063px;width:1px;height:13px;background:#8c8c8c;"></div>
<div style="position:absolute;left:1331px;top:1063px;width:1px;height:13px;background:#8c8c8c;"></div>
<div style="position:absolute;left:1402px;top:1063px;width:1px;height:13px;background:#8c8c8c;"></div>
<svg width="1440" height="140"><g transform="translate(1129,86.6) scale(1.0)">
<path d="M-2.4 -3.6c0-2.6 4.8-2.6 4.8 0" fill="none" stroke="#cf4f4f" stroke-width="1.3"/>
<path d="M-5.6 -2.6l1.2-1.4h8.8l1.2 1.4v7.4c0 .9-.6 1.4-1.4 1.4h-8.4c-.8 0-1.4-.5-1.4-1.4z" fill="#f29a9a" stroke="#cf4f4f" stroke-width="0.9"/>
<path d="M-5.6 -0.6h11.2" stroke="#cf4f4f" stroke-width="0.9"/>
<path d="M-5 -2.4l.9-1.1h8.2l.9 1.1v1.4h-10z" fill="#e86a6a"/>
<rect x="-1.3" y="-1.5" width="2.6" height="2" fill="#fbd0d0" stroke="#cf4f4f" stroke-width="0.5"/>
<path d="M-4.4 1.4h8.6M-4.4 3.4h8.6" stroke="#f8c4c4" stroke-width="0.8"/>
</g><circle cx="1125.6" cy="81.6" r="2.6" fill="#9be88f" stroke="#5fc85a" stroke-width="0.8"/><path d="M1124 81.6h3.2M1125.6 80v3.2" stroke="#eaffea" stroke-width="0.9"/><g transform="translate(1147.5,86.6) scale(1.0)">
<path d="M-2.4 -3.6c0-2.6 4.8-2.6 4.8 0" fill="none" stroke="#cf4f4f" stroke-width="1.3"/>
<path d="M-5.6 -2.6l1.2-1.4h8.8l1.2 1.4v7.4c0 .9-.6 1.4-1.4 1.4h-8.4c-.8 0-1.4-.5-1.4-1.4z" fill="#f29a9a" stroke="#cf4f4f" stroke-width="0.9"/>
<path d="M-5.6 -0.6h11.2" stroke="#cf4f4f" stroke-width="0.9"/>
<path d="M-5 -2.4l.9-1.1h8.2l.9 1.1v1.4h-10z" fill="#e86a6a"/>
<rect x="-1.3" y="-1.5" width="2.6" height="2" fill="#fbd0d0" stroke="#cf4f4f" stroke-width="0.5"/>
<path d="M-4.4 1.4h8.6M-4.4 3.4h8.6" stroke="#f8c4c4" stroke-width="0.8"/>
</g><path d="M1149 84.5l4.6-4.6" stroke="#2a2a30" stroke-width="1.8" stroke-linecap="round"/><path d="M1147.6 86l1.4-1.5" stroke="#caa" stroke-width="1.2"/><circle cx="1144.6" cy="81.8" r="2" fill="#a8e8a0" opacity=".8"/><g transform="translate(1167,86.6) scale(1.0)">
<path d="M-2.4 -3.6c0-2.6 4.8-2.6 4.8 0" fill="none" stroke="#cf4f4f" stroke-width="1.3"/>
<path d="M-5.6 -2.6l1.2-1.4h8.8l1.2 1.4v7.4c0 .9-.6 1.4-1.4 1.4h-8.4c-.8 0-1.4-.5-1.4-1.4z" fill="#f29a9a" stroke="#cf4f4f" stroke-width="0.9"/>
<path d="M-5.6 -0.6h11.2" stroke="#cf4f4f" stroke-width="0.9"/>
<path d="M-5 -2.4l.9-1.1h8.2l.9 1.1v1.4h-10z" fill="#e86a6a"/>
<rect x="-1.3" y="-1.5" width="2.6" height="2" fill="#fbd0d0" stroke="#cf4f4f" stroke-width="0.5"/>
<path d="M-4.4 1.4h8.6M-4.4 3.4h8.6" stroke="#f8c4c4" stroke-width="0.8"/>
</g><path d="M1168.5 80.5L1174.6999999999998 86.69999999999999M1174.6999999999998 80.5L1168.5 86.69999999999999" stroke="#b00f24" stroke-width="2" stroke-linecap="round"/><circle cx="1164" cy="81.8" r="2" fill="#a8e8a0" opacity=".7"/><path d="M1188.6 82.6l2.6-3 3.4 2.2 3.8-2v7l-7.2 3.2z" fill="#f6f23c" stroke="#dcd624" stroke-width="0.7"/><path d="M1189.6 88.4l1.8 2.6 1.6-2.2" fill="none" stroke="#111" stroke-width="1.4"/><path d="M1196.6 80.6l1.6 1.2-1.8 1.6" fill="none" stroke="#2aa83a" stroke-width="1.2"/><g transform="translate(1197.6,89.4) scale(0.62)">
<path d="M-2.4 -3.6c0-2.6 4.8-2.6 4.8 0" fill="none" stroke="#cf4f4f" stroke-width="1.3"/>
<path d="M-5.6 -2.6l1.2-1.4h8.8l1.2 1.4v7.4c0 .9-.6 1.4-1.4 1.4h-8.4c-.8 0-1.4-.5-1.4-1.4z" fill="#f29a9a" stroke="#cf4f4f" stroke-width="0.9"/>
<path d="M-5.6 -0.6h11.2" stroke="#cf4f4f" stroke-width="0.9"/>
<path d="M-5 -2.4l.9-1.1h8.2l.9 1.1v1.4h-10z" fill="#e86a6a"/>
<rect x="-1.3" y="-1.5" width="2.6" height="2" fill="#fbd0d0" stroke="#cf4f4f" stroke-width="0.5"/>
<path d="M-4.4 1.4h8.6M-4.4 3.4h8.6" stroke="#f8c4c4" stroke-width="0.8"/>
</g><path d="M1208 79.5h5l2 2v6.2h-7z" fill="#fff" stroke="#9ab" stroke-width="0.8"/><path d="M1209.4 84.6l1.8-3.6 1.8 3.6" fill="none" stroke="#2a5bd0" stroke-width="1.1"/><path d="M1212.8 83.6l3.4 2.6" stroke="#111" stroke-width="1.5"/><path d="M1216.8 84.4v2.6h-2.6" fill="none" stroke="#111" stroke-width="1.1"/><g transform="translate(1216.4,90) scale(0.62)">
<path d="M-2.4 -3.6c0-2.6 4.8-2.6 4.8 0" fill="none" stroke="#cf4f4f" stroke-width="1.3"/>
<path d="M-5.6 -2.6l1.2-1.4h8.8l1.2 1.4v7.4c0 .9-.6 1.4-1.4 1.4h-8.4c-.8 0-1.4-.5-1.4-1.4z" fill="#f29a9a" stroke="#cf4f4f" stroke-width="0.9"/>
<path d="M-5.6 -0.6h11.2" stroke="#cf4f4f" stroke-width="0.9"/>
<path d="M-5 -2.4l.9-1.1h8.2l.9 1.1v1.4h-10z" fill="#e86a6a"/>
<rect x="-1.3" y="-1.5" width="2.6" height="2" fill="#fbd0d0" stroke="#cf4f4f" stroke-width="0.5"/>
<path d="M-4.4 1.4h8.6M-4.4 3.4h8.6" stroke="#f8c4c4" stroke-width="0.8"/>
</g><path d="M1230 82h5l1.8 1.8v5h-6.8z" fill="#eef4ff" stroke="#4a90c8" stroke-width="0.9"/><path d="M1227.3 79.9L1231.8999999999999 84.5M1231.8999999999999 79.9L1227.3 84.5" stroke="#b00f24" stroke-width="1.7" stroke-linecap="round"/><g transform="translate(1236,90) scale(0.62)">
<path d="M-2.4 -3.6c0-2.6 4.8-2.6 4.8 0" fill="none" stroke="#cf4f4f" stroke-width="1.3"/>
<path d="M-5.6 -2.6l1.2-1.4h8.8l1.2 1.4v7.4c0 .9-.6 1.4-1.4 1.4h-8.4c-.8 0-1.4-.5-1.4-1.4z" fill="#f29a9a" stroke="#cf4f4f" stroke-width="0.9"/>
<path d="M-5.6 -0.6h11.2" stroke="#cf4f4f" stroke-width="0.9"/>
<path d="M-5 -2.4l.9-1.1h8.2l.9 1.1v1.4h-10z" fill="#e86a6a"/>
<rect x="-1.3" y="-1.5" width="2.6" height="2" fill="#fbd0d0" stroke="#cf4f4f" stroke-width="0.5"/>
<path d="M-4.4 1.4h8.6M-4.4 3.4h8.6" stroke="#f8c4c4" stroke-width="0.8"/>
</g><g transform="translate(1260.6,86.4)"><path d="M-5.2 -2.2l1.6-2h3.2l1.2 1.4h4.6v6.6l-9.6 1.8z" fill="#f4f040" stroke="#d8d020" stroke-width="0.8" stroke-linejoin="round"/>
<path d="M-4.4 4.6l2.4-5.2h8.4l-1.8 4z" fill="#fbfb7a" stroke="#d8d020" stroke-width="0.5"/></g><circle cx="1256.6" cy="82.4" r="2.2" fill="#a4ec98" stroke="#6fd068" stroke-width="0.7"/><path d="M1255.2 82.4h2.8M1256.6 81v2.8" stroke="#f0fff0" stroke-width="0.8"/><g transform="translate(1280.6,86.4)"><path d="M-5.2 -2.2l1.6-2h3.2l1.2 1.4h4.6v6.6l-9.6 1.8z" fill="#f4f040" stroke="#d8d020" stroke-width="0.8" stroke-linejoin="round"/>
<path d="M-4.4 4.6l2.4-5.2h8.4l-1.8 4z" fill="#fbfb7a" stroke="#d8d020" stroke-width="0.5"/></g><path d="M1281.0 80.0L1286.1999999999998 85.19999999999999M1286.1999999999998 80.0L1281.0 85.19999999999999" stroke="#b00f24" stroke-width="1.7" stroke-linecap="round"/><g transform="translate(1146,109) scale(1.05)">
<path d="M-2.4 -3.6c0-2.6 4.8-2.6 4.8 0" fill="none" stroke="#c22c2c" stroke-width="1.3"/>
<path d="M-5.6 -2.6l1.2-1.4h8.8l1.2 1.4v7.4c0 .9-.6 1.4-1.4 1.4h-8.4c-.8 0-1.4-.5-1.4-1.4z" fill="#ee5656" stroke="#c22c2c" stroke-width="0.9"/>
<path d="M-5.6 -0.6h11.2" stroke="#c22c2c" stroke-width="0.9"/>
<path d="M-5 -2.4l.9-1.1h8.2l.9 1.1v1.4h-10z" fill="#d83a3a"/>
<rect x="-1.3" y="-1.5" width="2.6" height="2" fill="#fbd0d0" stroke="#c22c2c" stroke-width="0.5"/>
<path d="M-4.4 1.4h8.6M-4.4 3.4h8.6" stroke="#f8c4c4" stroke-width="0.8"/>
</g></svg>
<svg width="1440" height="1080"><g transform="translate(1126.3,547)"><path d="M1.4 0.4h11.4v9.8h-3.6v2h-3.2v1.2H0.6V4z" fill="#b9bcc4" stroke="#6a6c74" stroke-width="0.7"/>
<path d="M1.4 0h11.6v2H1.4z" fill="#1c1c8c"/><path d="M12.6 2v8.4h-3.4" fill="none" stroke="#4a4a4a" stroke-width="1"/>
<rect x="1.4" y="6.2" width="2.4" height="6.6" fill="#7a84d8" stroke="#444a7a" stroke-width="0.5"/><rect x="4.6" y="4.6" width="2.4" height="7.6" fill="#8a94e0" stroke="#444a7a" stroke-width="0.5"/><rect x="7.8" y="3" width="2.4" height="7.6" fill="#aab0e8" stroke="#444a7a" stroke-width="0.5"/>
<path d="M0.6 13.6h5.6" stroke="#555" stroke-width="0.9"/></g><g transform="translate(1196,551.5)"><path d="M-3.6 -2.2v4.6c0 2.2 7.2 2.2 7.2 0v-4.6z" fill="#c8c040" stroke="#8c8418" stroke-width="0.7"/><ellipse cx="0" cy="-2.2" rx="3.6" ry="1.7" fill="#e8e070" stroke="#8c8418" stroke-width="0.7"/></g><g transform="translate(1190.4,556)"><path d="M-3.6 -2.2v4.6c0 2.2 7.2 2.2 7.2 0v-4.6z" fill="#c8c040" stroke="#8c8418" stroke-width="0.7"/><ellipse cx="0" cy="-2.2" rx="3.6" ry="1.7" fill="#e8e070" stroke="#8c8418" stroke-width="0.7"/></g><g transform="translate(1282.5,547)"><path d="M0.6 3.2a3.4 3.4 0 0 1 3.4-2.6v3z" fill="#f0a030"/><path d="M4.6 0.4h2.2v5.2H4.6z" fill="#2030c0"/><path d="M1.4 4.6h5.6v2.2H1.4z" fill="#e02828"/>
<rect x="3.2" y="7" width="2.4" height="6.6" fill="#e8c820"/><rect x="6" y="4.8" width="2.4" height="8.8" fill="#2838c8"/><rect x="8.8" y="7.6" width="2.2" height="6" fill="#e03030"/><rect x="11.4" y="6.2" width="2.2" height="7.4" fill="#28a048"/></g><g transform="translate(1125.6,1064)"><rect x="0.5" y="0.5" width="13" height="10.6" fill="#4a46ff" stroke="#1c1c50" stroke-width="1"/><rect x="0.5" y="0.5" width="13" height="2.2" fill="#1a1a60"/>
<path d="M5 3v8M9.4 3v8M1 5.6h12M1 8.2h12" stroke="#9aa0ff" stroke-width="0.8"/><path d="M0 12.2h14" stroke="#777" stroke-width="1"/></g><g transform="translate(1178.6,1063.4)"><rect x="0.6" y="3.6" width="8.6" height="9" fill="#e6e6e6" stroke="#3a3a3a" stroke-width="1"/><path d="M2 2.4h5.6v1.4H2z" fill="#555"/><path d="M2.4 7h5M2.4 9h5M2.4 11h5M5 7v4" stroke="#555" stroke-width="0.8"/>
<path d="M6.8 2.8l4.4-2.2 2.2.6v3.4l-3 1z" fill="#b8bcc8" stroke="#444" stroke-width="0.7"/><path d="M12.6 1v4.4" stroke="#1a1a90" stroke-width="1.6"/></g><g transform="translate(1250.4,1063.4)"><path d="M0 3h4M2 1v4" stroke="#28b060" stroke-width="1"/><path d="M5.4 1.2l2.4 2.8M7.8 1.2L5.4 4" stroke="#28b060" stroke-width="0.8"/><path d="M9.6 3.6l2.6-3" stroke="#28b8a0" stroke-width="0.9"/><path d="M0 7h5.6" stroke="#28b060" stroke-width="1" stroke-dasharray="1.4 1"/>
<path d="M0.4 12.6h1.2l1.6-4.4 1.4 4.4h.8l2-7.6 2 7.6h.6l1.6-5.6 1.4 5.6h1" fill="none" stroke="#2a30c8" stroke-width="1.2" stroke-linejoin="round"/></g><g transform="translate(1334,1063.6)"><path d="M0 2.6h5M2.5 0v5.2" stroke="#e02020" stroke-width="1.6"/><rect x="2" y="7" width="9" height="4.2" fill="#ececec" stroke="#555" stroke-width="0.9"/><path d="M12.6 4v7.4" stroke="#333" stroke-width="1.6"/><path d="M1.4 7v4" stroke="#444" stroke-width="1"/></g></svg>
<span class="t" style="left:25.00px;top:8.65px;font-size:10.2px;line-height:10.2px;color:#1a1a1a;">irAnalyze-RAMalyze - List of all Functional Groups at 375 [1/cm]</span>
<span class="t" style="left:9.50px;top:34.55px;font-size:10.4px;line-height:10.4px;color:#1a1a1a;transform:scaleX(0.9842);"><u>F</u>ile</span>
<span class="t" style="left:44.00px;top:34.55px;font-size:10.4px;line-height:10.4px;color:#1a1a1a;transform:scaleX(1.0044);"><u>E</u>dit</span>
<span class="t" style="left:79.00px;top:34.55px;font-size:10.4px;line-height:10.4px;color:#1a1a1a;transform:scaleX(0.9889);"><u>P</u>roject</span>
<span class="t" style="left:129.00px;top:34.55px;font-size:10.4px;line-height:10.4px;color:#1a1a1a;transform:scaleX(0.9606);"><u>2</u>D View</span>
<span class="t" style="left:185.00px;top:34.55px;font-size:10.4px;line-height:10.4px;color:#1a1a1a;transform:scaleX(0.9759);"><u>L</u>ibrary</span>
<span class="t" style="left:234.50px;top:34.55px;font-size:10.4px;line-height:10.4px;color:#1a1a1a;"><u>R</u>AMAN Interpretation</span>
<span class="t" style="left:356.50px;top:34.55px;font-size:10.4px;line-height:10.4px;color:#1a1a1a;transform:scaleX(0.9931);"><u>M</u>athematics</span>
<span class="t" style="left:433.50px;top:34.55px;font-size:10.4px;line-height:10.4px;color:#1a1a1a;transform:scaleX(1.0202);"><u>Q</u>uantify</span>
<span class="t" style="left:492.00px;top:34.55px;font-size:10.4px;line-height:10.4px;color:#1a1a1a;transform:scaleX(1.0117);"><u>R</u>eaction Monitoring</span>
<span class="t" style="left:604.50px;top:34.55px;font-size:10.4px;line-height:10.4px;color:#1a1a1a;transform:scaleX(0.9584);">Se<u>c</u>urity</span>
<span class="t" style="left:659.50px;top:34.55px;font-size:10.4px;line-height:10.4px;color:#1a1a1a;transform:scaleX(1.0097);"><u>T</u>ools</span>
<span class="t" style="left:702.00px;top:34.55px;font-size:10.4px;line-height:10.4px;color:#1a1a1a;transform:scaleX(1.0279);"><u>W</u>indow</span>
<span class="t" style="left:758.00px;top:34.55px;font-size:10.4px;line-height:10.4px;color:#1a1a1a;transform:scaleX(1.0285);"><u>H</u>elp</span>
<span class="t" style="left:10.50px;top:59.75px;font-size:10px;line-height:10px;color:#b2b2b2;transform:scaleX(0.9470);">O-DIBROMOBENZENE</span>
<span class="t" style="left:126.00px;top:59.75px;font-size:10px;line-height:10px;color:#000;font-weight:700;">List of all Functional Groups at 375 [1/cm]</span>
<span class="t" style="left:455.00px;top:128.65px;font-size:11.2px;line-height:11.2px;color:#06a046;transform:scaleX(1.0190);">Br</span>
<span class="t" style="left:9.77px;top:89.95px;font-size:10.6px;line-height:10.6px;color:#222;">1,5</span>
<span class="t" style="left:3.88px;top:161.95px;font-size:10.6px;line-height:10.6px;color:#222;">1,25</span>
<span class="t" style="left:18.59px;top:232.95px;font-size:10.6px;line-height:10.6px;color:#222;">1</span>
<span class="t" style="left:3.88px;top:303.95px;font-size:10.6px;line-height:10.6px;color:#222;">0,75</span>
<span class="t" style="left:9.77px;top:374.95px;font-size:10.6px;line-height:10.6px;color:#222;">0,5</span>
<span class="t" style="left:3.88px;top:446.95px;font-size:10.6px;line-height:10.6px;color:#222;">0,25</span>
<span class="t" style="left:18.59px;top:517.95px;font-size:10.6px;line-height:10.6px;color:#222;">0</span>
<span class="t" style="left:14.50px;top:150.65px;font-size:10.2px;line-height:10.2px;color:#222;transform:rotate(-90deg);transform-origin:0 0;">Abs</span>
<span class="t" style="left:1089.59px;top:554.95px;font-size:10.6px;line-height:10.6px;color:#222;">250</span>
<span class="t" style="left:1018.66px;top:554.95px;font-size:10.6px;line-height:10.6px;color:#222;">500</span>
<span class="t" style="left:947.73px;top:554.95px;font-size:10.6px;line-height:10.6px;color:#222;">750</span>
<span class="t" style="left:873.85px;top:554.95px;font-size:10.6px;line-height:10.6px;color:#222;">1000</span>
<span class="t" style="left:802.92px;top:554.95px;font-size:10.6px;line-height:10.6px;color:#222;">1250</span>
<span class="t" style="left:731.99px;top:554.95px;font-size:10.6px;line-height:10.6px;color:#222;">1500</span>
<span class="t" style="left:661.06px;top:554.95px;font-size:10.6px;line-height:10.6px;color:#222;">1750</span>
<span class="t" style="left:590.13px;top:554.95px;font-size:10.6px;line-height:10.6px;color:#222;">2000</span>
<span class="t" style="left:519.20px;top:554.95px;font-size:10.6px;line-height:10.6px;color:#222;">2250</span>
<span class="t" style="left:448.27px;top:554.95px;font-size:10.6px;line-height:10.6px;color:#222;">2500</span>
<span class="t" style="left:377.34px;top:554.95px;font-size:10.6px;line-height:10.6px;color:#222;">2750</span>
<span class="t" style="left:306.41px;top:554.95px;font-size:10.6px;line-height:10.6px;color:#222;">3000</span>
<span class="t" style="left:235.48px;top:554.95px;font-size:10.6px;line-height:10.6px;color:#222;">3250</span>
<span class="t" style="left:164.55px;top:554.95px;font-size:10.6px;line-height:10.6px;color:#222;">3500</span>
<span class="t" style="left:93.62px;top:554.95px;font-size:10.6px;line-height:10.6px;color:#222;">3750</span>
<span class="t" style="left:1052.32px;top:554.95px;font-size:10.6px;line-height:10.6px;color:#222;">1/cm</span>
<span class="t" style="left:577.70px;top:335.00px;font-size:10.5px;line-height:10.5px;color:#000;">X-sensistive, [1080-1025], Priority=High, Threshold=Variable</span>
<span class="t" style="left:6.70px;top:574.60px;font-size:10.3px;line-height:10.3px;color:#fff;font-weight:700;transform:scaleX(1.1248);">Corresponding Chemical Classification Rules</span>
<span class="t" style="left:6.20px;top:593.55px;font-size:10.4px;line-height:10.4px;color:#111;transform:scaleX(1.0777);">Vibration</span>
<span class="t" style="left:119.40px;top:593.55px;font-size:10.4px;line-height:10.4px;color:#111;transform:scaleX(1.0675);">Start WN</span>
<span class="t" style="left:180.50px;top:593.55px;font-size:10.4px;line-height:10.4px;color:#111;transform:scaleX(1.0339);">End WN</span>
<span class="t" style="left:237.30px;top:593.55px;font-size:10.4px;line-height:10.4px;color:#111;transform:scaleX(1.0602);">Threshold</span>
<span class="t" style="left:301.00px;top:593.55px;font-size:10.4px;line-height:10.4px;color:#111;transform:scaleX(1.0821);">Priority</span>
<span class="t" style="left:4.70px;top:612.05px;font-size:9.4px;line-height:9.4px;color:#1a1a1a;">C-H Stretch</span>
<span class="t" style="left:118.00px;top:612.05px;font-size:9.4px;line-height:9.4px;color:#1a1a1a;">3105</span>
<span class="t" style="left:179.00px;top:612.05px;font-size:9.4px;line-height:9.4px;color:#1a1a1a;">3005</span>
<span class="t" style="left:235.30px;top:612.05px;font-size:9.4px;line-height:9.4px;color:#1a1a1a;">Variable</span>
<span class="t" style="left:300.00px;top:612.05px;font-size:9.4px;line-height:9.4px;color:#1a1a1a;">High</span>
<span class="t" style="left:4.70px;top:632.05px;font-size:9.4px;line-height:9.4px;color:#1a1a1a;">C=C Stretch</span>
<span class="t" style="left:118.00px;top:632.05px;font-size:9.4px;line-height:9.4px;color:#1a1a1a;">1620</span>
<span class="t" style="left:179.00px;top:632.05px;font-size:9.4px;line-height:9.4px;color:#1a1a1a;">1565</span>
<span class="t" style="left:235.30px;top:632.05px;font-size:9.4px;line-height:9.4px;color:#1a1a1a;">Variable</span>
<span class="t" style="left:300.00px;top:632.05px;font-size:9.4px;line-height:9.4px;color:#1a1a1a;">Mandatory</span>
<span class="t" style="left:4.70px;top:651.05px;font-size:9.4px;line-height:9.4px;color:#1a1a1a;">X-sensistive</span>
<span class="t" style="left:118.00px;top:651.05px;font-size:9.4px;line-height:9.4px;color:#1a1a1a;">1080</span>
<span class="t" style="left:179.00px;top:651.05px;font-size:9.4px;line-height:9.4px;color:#1a1a1a;">1025</span>
<span class="t" style="left:235.30px;top:651.05px;font-size:9.4px;line-height:9.4px;color:#1a1a1a;">Variable</span>
<span class="t" style="left:300.00px;top:651.05px;font-size:9.4px;line-height:9.4px;color:#1a1a1a;">High</span>
<span class="t" style="left:4.70px;top:671.05px;font-size:9.4px;line-height:9.4px;color:#1a1a1a;">C-Br Stretch</span>
<span class="t" style="left:118.00px;top:671.05px;font-size:9.4px;line-height:9.4px;color:#1a1a1a;">400</span>
<span class="t" style="left:179.00px;top:671.05px;font-size:9.4px;line-height:9.4px;color:#1a1a1a;">260</span>
<span class="t" style="left:235.30px;top:671.05px;font-size:9.4px;line-height:9.4px;color:#1a1a1a;">Variable</span>
<span class="t" style="left:300.00px;top:671.05px;font-size:9.4px;line-height:9.4px;color:#1a1a1a;">Very High</span>
<span class="t" style="left:4.70px;top:691.05px;font-size:9.4px;line-height:9.4px;color:#1a1a1a;">C-Br Def</span>
<span class="t" style="left:118.00px;top:691.05px;font-size:9.4px;line-height:9.4px;color:#1a1a1a;">290</span>
<span class="t" style="left:179.00px;top:691.05px;font-size:9.4px;line-height:9.4px;color:#1a1a1a;">225</span>
<span class="t" style="left:235.30px;top:691.05px;font-size:9.4px;line-height:9.4px;color:#1a1a1a;">Variable</span>
<span class="t" style="left:300.00px;top:691.05px;font-size:9.4px;line-height:9.4px;color:#1a1a1a;">Very High</span>
<span class="t" style="left:565.70px;top:574.60px;font-size:10.3px;line-height:10.3px;color:#fff;font-weight:700;transform:scaleX(1.1215);">Missing Chemical Classification Rules</span>
<span class="t" style="left:565.00px;top:593.55px;font-size:10.4px;line-height:10.4px;color:#111;transform:scaleX(1.0777);">Vibration</span>
<span class="t" style="left:625.20px;top:593.55px;font-size:10.4px;line-height:10.4px;color:#111;transform:scaleX(1.0675);">Start WN</span>
<span class="t" style="left:685.80px;top:593.55px;font-size:10.4px;line-height:10.4px;color:#111;transform:scaleX(1.0339);">End WN</span>
<span class="t" style="left:742.80px;top:593.55px;font-size:10.4px;line-height:10.4px;color:#111;transform:scaleX(1.0602);">Threshold</span>
<span class="t" style="left:807.30px;top:593.55px;font-size:10.4px;line-height:10.4px;color:#111;transform:scaleX(1.0821);">Priority</span>
<span class="t" style="left:6.70px;top:819.60px;font-size:10.3px;line-height:10.3px;color:#fff;font-weight:700;transform:scaleX(1.1212);">Matching Functional Groups</span>
<span class="t" style="left:7.00px;top:838.55px;font-size:10.4px;line-height:10.4px;color:#111;transform:scaleX(1.0512);">Quality</span>
<span class="t" style="left:58.70px;top:838.55px;font-size:10.4px;line-height:10.4px;color:#111;transform:scaleX(1.0412);">Functional Group</span>
<span class="t" style="left:244.60px;top:838.55px;font-size:10.4px;line-height:10.4px;color:#111;transform:scaleX(1.0154);">Chemical Sub Class</span>
<span class="t" style="left:392.00px;top:838.55px;font-size:10.4px;line-height:10.4px;color:#111;transform:scaleX(1.0251);">Chemical Class</span>
<span class="t" style="left:4.60px;top:857.05px;font-size:9.4px;line-height:9.4px;color:#fff;">100</span>
<span class="t" style="left:57.00px;top:857.05px;font-size:9.4px;line-height:9.4px;color:#fff;">Bromo Compound</span>
<span class="t" style="left:390.00px;top:857.05px;font-size:9.4px;line-height:9.4px;color:#fff;">Aromatic Halogen Compound</span>
<span class="t" style="left:4.60px;top:871.05px;font-size:9.4px;line-height:9.4px;color:#1a1a1a;">49</span>
<span class="t" style="left:57.00px;top:871.05px;font-size:9.4px;line-height:9.4px;color:#1a1a1a;">Methoxy ether</span>
<span class="t" style="left:242.50px;top:871.05px;font-size:9.4px;line-height:9.4px;color:#1a1a1a;">Silyl esters and ethers</span>
<span class="t" style="left:390.00px;top:871.05px;font-size:9.4px;line-height:9.4px;color:#1a1a1a;">Aliphatic Silicon Compound</span>
<span class="t" style="left:4.60px;top:886.05px;font-size:9.4px;line-height:9.4px;color:#1a1a1a;">6,6</span>
<span class="t" style="left:57.00px;top:886.05px;font-size:9.4px;line-height:9.4px;color:#1a1a1a;">Aromatic, Possibly Sulfonyl Halide</span>
<span class="t" style="left:242.50px;top:886.05px;font-size:9.4px;line-height:9.4px;color:#1a1a1a;">Aromatic Sulfoxy Compound</span>
<span class="t" style="left:390.00px;top:886.05px;font-size:9.4px;line-height:9.4px;color:#1a1a1a;">Aromatic Sulfur Compound</span>
<span class="t" style="left:4.60px;top:900.05px;font-size:9.4px;line-height:9.4px;color:#1a1a1a;">6,6</span>
<span class="t" style="left:57.00px;top:900.05px;font-size:9.4px;line-height:9.4px;color:#1a1a1a;">Ketals, Acetals</span>
<span class="t" style="left:390.00px;top:900.05px;font-size:9.4px;line-height:9.4px;color:#1a1a1a;">Aliphatic Ether</span>
<span class="t" style="left:4.60px;top:915.05px;font-size:9.4px;line-height:9.4px;color:#1a1a1a;">6,5</span>
<span class="t" style="left:57.00px;top:915.05px;font-size:9.4px;line-height:9.4px;color:#1a1a1a;">Aliphatic Alkoxy, Possibly Chloroethyl</span>
<span class="t" style="left:390.00px;top:915.05px;font-size:9.4px;line-height:9.4px;color:#1a1a1a;">Aliphatic Ether</span>
<span class="t" style="left:4.60px;top:930.05px;font-size:9.4px;line-height:9.4px;color:#1a1a1a;">6,5</span>
<span class="t" style="left:57.00px;top:930.05px;font-size:9.4px;line-height:9.4px;color:#1a1a1a;">Aromatic Sulfoxide</span>
<span class="t" style="left:242.50px;top:930.05px;font-size:9.4px;line-height:9.4px;color:#1a1a1a;">Aromatic Sulfoxy Compound</span>
<span class="t" style="left:390.00px;top:930.05px;font-size:9.4px;line-height:9.4px;color:#1a1a1a;">Aromatic Sulfur Compound</span>
<span class="t" style="left:4.60px;top:944.05px;font-size:9.4px;line-height:9.4px;color:#1a1a1a;">6,4</span>
<span class="t" style="left:57.00px;top:944.05px;font-size:9.4px;line-height:9.4px;color:#1a1a1a;">Aliphatic Mercaptan, General</span>
<span class="t" style="left:242.50px;top:944.05px;font-size:9.4px;line-height:9.4px;color:#1a1a1a;">Aliphatic Mercaptan/Thiol</span>
<span class="t" style="left:390.00px;top:944.05px;font-size:9.4px;line-height:9.4px;color:#1a1a1a;">Aliphatic Sulfur Compound</span>
<span class="t" style="left:4.60px;top:959.05px;font-size:9.4px;line-height:9.4px;color:#1a1a1a;">6,3</span>
<span class="t" style="left:57.00px;top:959.05px;font-size:9.4px;line-height:9.4px;color:#1a1a1a;">Aliphatic Alkoxy, Possibly Epoxide</span>
<span class="t" style="left:390.00px;top:959.05px;font-size:9.4px;line-height:9.4px;color:#1a1a1a;">Aliphatic Ether</span>
<span class="t" style="left:4.60px;top:973.05px;font-size:9.4px;line-height:9.4px;color:#1a1a1a;">6,2</span>
<span class="t" style="left:57.00px;top:973.05px;font-size:9.4px;line-height:9.4px;color:#1a1a1a;">Aliphatic Mercapto, Ether</span>
<span class="t" style="left:242.50px;top:973.05px;font-size:9.4px;line-height:9.4px;color:#1a1a1a;">Aliphatic Mercaptan/Thiol</span>
<span class="t" style="left:390.00px;top:973.05px;font-size:9.4px;line-height:9.4px;color:#1a1a1a;">Aliphatic Sulfur Compound</span>
<span class="t" style="left:4.60px;top:988.05px;font-size:9.4px;line-height:9.4px;color:#1a1a1a;">6</span>
<span class="t" style="left:57.00px;top:988.05px;font-size:9.4px;line-height:9.4px;color:#1a1a1a;">Aliphatic Sulfonylchloride</span>
<span class="t" style="left:242.50px;top:988.05px;font-size:9.4px;line-height:9.4px;color:#1a1a1a;">Aliphatic Sulfoxy-compound</span>
<span class="t" style="left:390.00px;top:988.05px;font-size:9.4px;line-height:9.4px;color:#1a1a1a;">Aliphatic Sulfur Compound</span>
<span class="t" style="left:4.60px;top:1003.05px;font-size:9.4px;line-height:9.4px;color:#1a1a1a;">5,9</span>
<span class="t" style="left:57.00px;top:1003.05px;font-size:9.4px;line-height:9.4px;color:#1a1a1a;">Unsaturated Hydrocarbon, Simple Alkyne</span>
<span class="t" style="left:390.00px;top:1003.05px;font-size:9.4px;line-height:9.4px;color:#1a1a1a;">Alkyne</span>
<span class="t" style="left:4.60px;top:1017.05px;font-size:9.4px;line-height:9.4px;color:#1a1a1a;">5,5</span>
<span class="t" style="left:57.00px;top:1017.05px;font-size:9.4px;line-height:9.4px;color:#1a1a1a;">Aliphatic Nitrile</span>
<span class="t" style="left:242.50px;top:1017.05px;font-size:9.4px;line-height:9.4px;color:#1a1a1a;">Aliphatic Nitrile</span>
<span class="t" style="left:390.00px;top:1017.05px;font-size:9.4px;line-height:9.4px;color:#1a1a1a;">Aliphatic Nitrile or Multiple Bonded Nitrogen</span>
<span class="t" style="left:4.60px;top:1032.05px;font-size:9.4px;line-height:9.4px;color:#1a1a1a;">5,4</span>
<span class="t" style="left:57.00px;top:1032.05px;font-size:9.4px;line-height:9.4px;color:#1a1a1a;">Linear Bromo Compound</span>
<span class="t" style="left:242.50px;top:1032.05px;font-size:9.4px;line-height:9.4px;color:#1a1a1a;">Aliphatic Brominated Compound</span>
<span class="t" style="left:390.00px;top:1032.05px;font-size:9.4px;line-height:9.4px;color:#1a1a1a;">Aliphatic Halogen Compound</span>
<span class="t" style="left:4.60px;top:1046.05px;font-size:9.4px;line-height:9.4px;color:#1a1a1a;">5,1</span>
<span class="t" style="left:57.00px;top:1046.05px;font-size:9.4px;line-height:9.4px;color:#1a1a1a;">Substituted Allene</span>
<span class="t" style="left:390.00px;top:1046.05px;font-size:9.4px;line-height:9.4px;color:#1a1a1a;">Alkene</span>
<span class="t" style="left:4.60px;top:1061.05px;font-size:9.4px;line-height:9.4px;color:#1a1a1a;">0,2</span>
<span class="t" style="left:57.00px;top:1061.05px;font-size:9.4px;line-height:9.4px;color:#1a1a1a;">Aromatic Substituted Acid Halide</span>
<span class="t" style="left:242.50px;top:1061.05px;font-size:9.4px;line-height:9.4px;color:#1a1a1a;">Aromatic Acid Halide</span>
<span class="t" style="left:390.00px;top:1061.05px;font-size:9.4px;line-height:9.4px;color:#1a1a1a;">Aromatic or Conjugated Acid Halide</span>
<span class="t" style="left:4.60px;top:1076.05px;font-size:9.4px;line-height:9.4px;color:#1a1a1a;">0</span>
<span class="t" style="left:57.00px;top:1076.05px;font-size:9.4px;line-height:9.4px;color:#1a1a1a;">Aliphatic Alkoxy, Possibly Methoxy</span>
<span class="t" style="left:390.00px;top:1076.05px;font-size:9.4px;line-height:9.4px;color:#1a1a1a;">Aliphatic Ether</span>
<span class="t" style="left:1123.50px;top:57.65px;font-size:10.2px;line-height:10.2px;color:#1b2440;transform:scaleX(0.9707);">Projects - RAMalyze Demo</span>
<span class="t" style="left:1157.50px;top:103.65px;font-size:10.2px;line-height:10.2px;color:#1b2440;transform:scaleX(0.9681);">RAMalyze Demo</span>
<span class="t" style="left:1173.60px;top:118.75px;font-size:10px;line-height:10px;color:#1b2440;transform:scaleX(0.9263);">1,5-HEXADIENE</span>
<span class="t" style="left:1173.60px;top:133.75px;font-size:10px;line-height:10px;color:#1b2440;transform:scaleX(0.8936);">BUTYRONITRILE</span>
<span class="t" style="left:1173.60px;top:149.75px;font-size:10px;line-height:10px;color:#1b2440;transform:scaleX(0.9327);">HEPTADECYLCYCLOHEXANE</span>
<span class="t" style="left:1173.60px;top:164.75px;font-size:10px;line-height:10px;color:#1b2440;transform:scaleX(0.9110);">ISOVALERALDEHYDE</span>
<span class="t" style="left:1173.60px;top:180.75px;font-size:10px;line-height:10px;color:#1b2440;transform:scaleX(0.9517);">O-DIBROMOBENZENE</span>
<span class="t" style="left:1173.60px;top:195.75px;font-size:10px;line-height:10px;color:#1b2440;transform:scaleX(0.9596);">P-BROMOPHENYL ISOCYANATE</span>
<span class="t" style="left:1173.60px;top:211.75px;font-size:10px;line-height:10px;color:#1b2440;transform:scaleX(0.9397);">P-CHLOROBENZONITRILE</span>
<span class="t" style="left:1173.60px;top:226.75px;font-size:10px;line-height:10px;color:#1b2440;transform:scaleX(0.9302);">P-TOLUENESULFONYL CHLORIDE</span>
<span class="t" style="left:1173.60px;top:241.75px;font-size:10px;line-height:10px;color:#1b2440;transform:scaleX(0.9614);">TRANS-2-BUTEN-1-OL</span>
<span class="t" style="left:1173.60px;top:257.75px;font-size:10px;line-height:10px;color:#1b2440;transform:scaleX(0.8942);">TRIPROPYLSILANE</span>
<span class="t" style="left:1143.70px;top:551.65px;font-size:10.2px;line-height:10.2px;color:#1b2440;transform:scaleX(0.9779);">Projects</span>
<span class="t" style="left:1205.50px;top:551.65px;font-size:10.2px;line-height:10.2px;color:#b4b4b4;transform:scaleX(0.9804);">Library Explorer</span>
<span class="t" style="left:1300.60px;top:551.65px;font-size:10.2px;line-height:10.2px;color:#b4b4b4;transform:scaleX(1.0276);">Quantify</span>
<span class="t" style="left:1123.20px;top:574.65px;font-size:10.2px;line-height:10.2px;color:#1b2440;transform:scaleX(1.0057);">Labels of List of all Functional Groups at 375 [1/cm]</span>
<span class="t" style="left:1125.60px;top:598.65px;font-size:10.2px;line-height:10.2px;color:#1b2440;transform:scaleX(1.0299);">Name</span>
<span class="t" style="left:1254.40px;top:598.65px;font-size:10.2px;line-height:10.2px;color:#1b2440;transform:scaleX(0.9877);">Value</span>
<span class="t" style="left:1383.30px;top:598.65px;font-size:10.2px;line-height:10.2px;color:#1b2440;transform:scaleX(1.0207);">Unit</span>
<span class="t" style="left:1146.10px;top:617.65px;font-size:10.2px;line-height:10.2px;color:#1b2440;transform:scaleX(0.8288);">TITLE</span>
<span class="t" style="left:1146.10px;top:634.65px;font-size:10.2px;line-height:10.2px;color:#1b2440;transform:scaleX(0.9214);">SAMPLINGPROCED...</span>
<span class="t" style="left:1146.10px;top:650.65px;font-size:10.2px;line-height:10.2px;color:#1b2440;transform:scaleX(0.8738);">CASREGISTRYNO</span>
<span class="t" style="left:1146.10px;top:666.65px;font-size:10.2px;line-height:10.2px;color:#1b2440;transform:scaleX(0.9697);">MOLFORM</span>
<span class="t" style="left:1146.10px;top:683.65px;font-size:10.2px;line-height:10.2px;color:#1b2440;transform:scaleX(0.8922);">DATAPROCESSING</span>
<span class="t" style="left:1146.10px;top:699.65px;font-size:10.2px;line-height:10.2px;color:#1b2440;transform:scaleX(0.9245);">ORIGIN</span>
<span class="t" style="left:1146.10px;top:715.65px;font-size:10.2px;line-height:10.2px;color:#1b2440;transform:scaleX(1.0315);">ImportedFrom</span>
<span class="t" style="left:1146.10px;top:731.65px;font-size:10.2px;line-height:10.2px;color:#1b2440;transform:scaleX(0.9924);">Sample Time</span>
<span class="t" style="left:1146.10px;top:748.65px;font-size:10.2px;line-height:10.2px;color:#1b2440;transform:scaleX(0.9903);">Filename</span>
<span class="t" style="left:1146.10px;top:764.65px;font-size:10.2px;line-height:10.2px;color:#1b2440;transform:scaleX(0.9654);">DataSourceUrl</span>
<span class="t" style="left:1143.70px;top:1068.65px;font-size:10.2px;line-height:10.2px;color:#1b2440;transform:scaleX(0.9490);">Labels</span>
<span class="t" style="left:1197.30px;top:1068.65px;font-size:10.2px;line-height:10.2px;color:#b4b4b4;transform:scaleX(0.9690);">Properties</span>
<span class="t" style="left:1268.80px;top:1068.65px;font-size:10.2px;line-height:10.2px;color:#b4b4b4;transform:scaleX(0.9957);">Mathematics</span>
<span class="t" style="left:1352.70px;top:1068.65px;font-size:10.2px;line-height:10.2px;color:#b4b4b4;transform:scaleX(1.0045);">Audit Trail</span>

</body></html>
